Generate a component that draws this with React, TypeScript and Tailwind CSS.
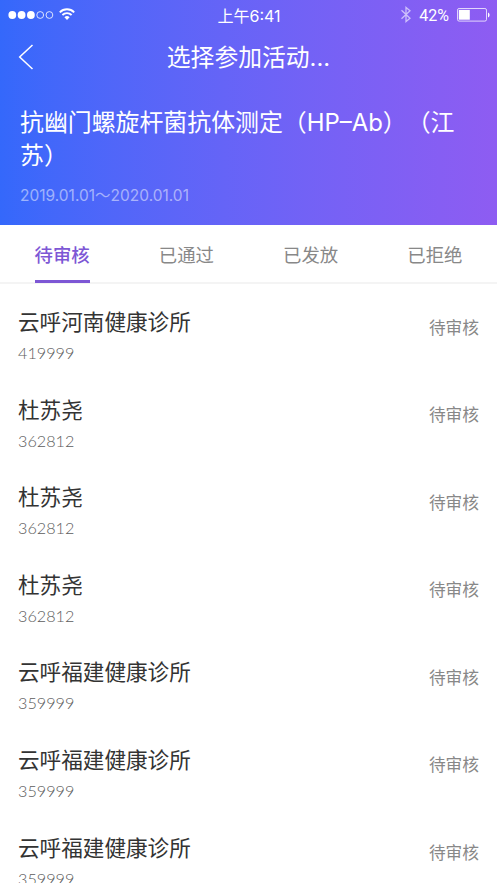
const tabs = ['待审核', '已通过', '已发放', '已拒绝'];

const records = [
  { name: '云呼河南健康诊所', code: '419999', status: '待审核' },
  { name: '杜苏尧', code: '362812', status: '待审核' },
  { name: '杜苏尧', code: '362812', status: '待审核' },
  { name: '杜苏尧', code: '362812', status: '待审核' },
  { name: '云呼福建健康诊所', code: '359999', status: '待审核' },
  { name: '云呼福建健康诊所', code: '359999', status: '待审核' },
  { name: '云呼福建健康诊所', code: '359999', status: '待审核' },
];

const StatusBar = () => {
  return (
    <div className="grid h-[30px] grid-cols-[1fr_auto_1fr] items-center pl-2 pr-[7px] text-white">
      <div className="-mt-[2px] flex items-center">
        {/* Signal dots */}
        <svg className="h-[10px] w-[46px]" viewBox="0 0 46 10" fill="none">
          <circle cx="4.3" cy="5" r="3.9" fill="currentColor" />
          <circle cx="13.6" cy="5" r="3.9" fill="currentColor" />
          <circle cx="22.9" cy="5" r="3.9" fill="currentColor" />
          <circle cx="32.2" cy="5" r="3.4" stroke="currentColor" strokeWidth="0.8" />
          <circle cx="41.4" cy="5" r="3.4" stroke="currentColor" strokeWidth="0.8" />
        </svg>
        {/* Wifi */}
        <svg className="ml-[5px] -mt-px h-3 w-4" viewBox="0 0 16 12" fill="none" stroke="currentColor">
          <path d="M0.8 4.3a10.2 10.2 0 0 1 14.4 0" strokeWidth="1.9" />
          <path d="M3.4 7a6.5 6.5 0 0 1 9.2 0" strokeWidth="1.8" />
          <path d="M8 11.9 5.4 9.2a3.7 3.7 0 0 1 5.2 0z" fill="currentColor" stroke="none" />
        </svg>
      </div>
      <span className="pt-px text-base leading-[30px]">上午6:41</span>
      <div className="flex items-center justify-end">
        {/* Bluetooth */}
        <svg className="-mt-[2px] h-[17px] w-[10px] opacity-60" viewBox="0 0 10 17" fill="none" stroke="currentColor" strokeWidth="1.3">
          <path d="M0.5 4.3 9 12.2 5 15.6V1.4l4 3.4L0.5 12.7" />
        </svg>
        <span className="ml-2 mr-px font-[Roboto,sans-serif] text-base leading-[28px]">42%</span>
        {/* Battery */}
        <svg className="ml-[7px] -mt-[2px] h-[14px] w-[33px]" viewBox="0 0 33 14" fill="none">
          <rect x="0.5" y="0.5" width="29" height="12.6" rx="1.6" stroke="currentColor" strokeOpacity="0.75" />
          <rect x="1.8" y="1.9" width="11" height="9.8" fill="currentColor" />
          <path d="M31 4.6c2.1.7 2.1 4.1 0 4.8z" fill="currentColor" />
        </svg>
      </div>
    </div>
  );
};

const Header = () => {
  return (
    <header className="h-[225px] bg-linear-to-r from-[#3468fb] to-[#8e5cf2] text-white">
      <StatusBar />
      <div className="grid h-[54px] grid-cols-[1fr_auto_1fr] items-center px-[18px]">
        <svg className="h-[26px] w-4" viewBox="0 0 16 26" fill="none" stroke="currentColor" strokeWidth="1.5">
          <path d="M14.5 1 1.7 13l12.8 12" />
        </svg>
        <h1 className="pt-[2px] text-[23.8px] leading-[52px]">选择参加活动...</h1>
      </div>
      <div className="pl-5 pr-4 pt-[22px]">
        <h2 className="w-[450px] text-[23.9px] leading-[33px] [text-spacing-trim:space-all]">
          抗幽门螺旋杆菌抗体测定（HP–Ab）（江苏）
        </h2>
        <p className="mt-3 text-[15.5px] leading-6 text-white/50">2019.01.01～2020.01.01</p>
      </div>
    </header>
  );
};

const App = () => {
  return (
    <div className="h-[883px] w-[497px] overflow-hidden bg-white font-[Inter,'Noto_Sans_CJK_SC',sans-serif]">
      <Header />
      <nav className="grid h-[59px] grid-cols-4 border-b-2 border-[#f4f4f4] text-[18.4px]">
        {tabs.map((tab, i) => (
          <div key={tab} className="flex justify-center">
            <span
              className={
                i === 0
                  ? 'h-[58px] border-b-[3px] border-[#7d57d5] leading-[60px] text-[#7d57d5] font-medium'
                  : 'leading-[60px] text-[#888888]'
              }
            >
              {tab}
            </span>
          </div>
        ))}
      </nav>
      <ul className="px-[18px]">
        {records.map((item, i) => (
          <li key={i} className="flex h-[87.6px] justify-between pt-[22px]">
            <div>
              <div className="text-[21.6px] leading-8 text-[#333333]">{item.name}</div>
              <div className="mt-[3px] font-[Lato,sans-serif] text-[16.2px] font-light leading-6 text-[#5c5c5c]">{item.code}</div>
            </div>
            <span className="pt-[9.5px] text-[16.7px] leading-6 text-[#888888]">{item.status}</span>
          </li>
        ))}
      </ul>
    </div>
  );
};

export default App;
